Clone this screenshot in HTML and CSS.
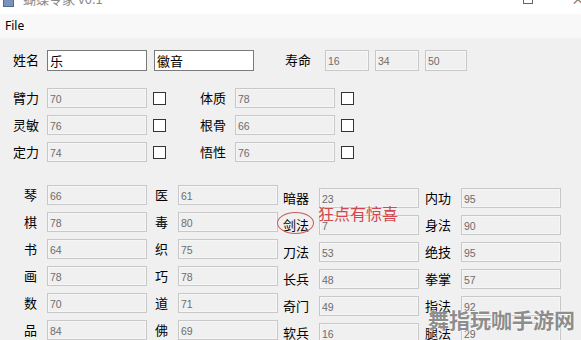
FILE: index.html
```html
<!DOCTYPE html>
<html lang="zh-CN">
<head>
    <meta charset="UTF-8">
    <title>蝴蝶令家 v0.1</title>
    <link rel="stylesheet" href="styles.css">
</head>
<body>
    <div class="titlebar">
        <span class="app-icon"></span>
        <span class="title">蝴蝶令家 v0.1</span>
        <span class="win-max"></span>
        <span class="win-close">×</span>
    </div>
    <div class="menubar"><span>File</span></div>

    <div class="main">
        <div class="row name-row">
            <span class="label w34">姓名</span>
            <input class="edit" type="text" value="乐">
            <input class="edit second" type="text" value="徽音">
            <span class="label life">寿命</span>
            <input class="box small" type="text" value="16" disabled>
            <input class="box small" type="text" value="34" disabled>
            <input class="box small last" type="text" value="50" disabled>
        </div>

        <div class="attrs">
            <div class="row">
                <span class="label w34">臂力</span><input class="box" value="70" disabled><span class="check"></span>
                <span class="label w35 col2">体质</span><input class="box" value="78" disabled><span class="check"></span>
            </div>
            <div class="row">
                <span class="label w34">灵敏</span><input class="box" value="76" disabled><span class="check"></span>
                <span class="label w35 col2">根骨</span><input class="box" value="66" disabled><span class="check"></span>
            </div>
            <div class="row">
                <span class="label w34">定力</span><input class="box" value="74" disabled><span class="check"></span>
                <span class="label w35 col2">悟性</span><input class="box" value="76" disabled><span class="check"></span>
            </div>
        </div>

        <div class="skills">
            <div class="skill-grid left">
                <span class="label r">琴</span><input class="box" value="66" disabled>
                <span class="label r">医</span><input class="box" value="61" disabled>
                <span class="label r">棋</span><input class="box" value="78" disabled>
                <span class="label r">毒</span><input class="box" value="80" disabled>
                <span class="label r">书</span><input class="box" value="64" disabled>
                <span class="label r">织</span><input class="box" value="75" disabled>
                <span class="label r">画</span><input class="box" value="78" disabled>
                <span class="label r">巧</span><input class="box" value="78" disabled>
                <span class="label r">数</span><input class="box" value="70" disabled>
                <span class="label r">道</span><input class="box" value="71" disabled>
                <span class="label r">品</span><input class="box" value="84" disabled>
                <span class="label r">佛</span><input class="box" value="69" disabled>
            </div>
            <div class="skill-grid right">
                <span class="label r">暗器</span><input class="box" value="23" disabled>
                <span class="label r">内功</span><input class="box" value="95" disabled>
                <span class="label r">剑法</span><input class="box" value="7" disabled>
                <span class="label r">身法</span><input class="box" value="90" disabled>
                <span class="label r">刀法</span><input class="box" value="53" disabled>
                <span class="label r">绝技</span><input class="box" value="95" disabled>
                <span class="label r">长兵</span><input class="box" value="48" disabled>
                <span class="label r">拳掌</span><input class="box" value="57" disabled>
                <span class="label r">奇门</span><input class="box" value="49" disabled>
                <span class="label r">指法</span><input class="box" value="92" disabled>
                <span class="label r">软兵</span><input class="box" value="16" disabled>
                <span class="label r">腿法</span><input class="box" value="29" disabled>
            </div>
        </div>
    </div>

    <!-- annotation drawn on top of the screenshot -->
    <span class="circle"></span>
    <span class="note">狂点有惊喜</span>
    <span class="watermark">舞指玩咖手游网</span>
</body>
</html>
```

FILE: styles.css
```css
body {
    margin: 0;
    width: 581px;
    height: 340px;
    overflow: hidden;
    position: relative;
    background-color: #f0f0f0;
    font-family: "Noto Sans CJK SC", "Noto Sans", sans-serif;
    color: #000;
}

.titlebar {
    height: 14px;
    background-color: #fff;
    display: flex;
    align-items: flex-start;
    overflow: hidden;
}

.app-icon {
    width: 9px;
    height: 6px;
    margin-left: 3px;
    background-color: #7b93b8;
    border: 1px solid #4a6a98;
    border-top: none;
}

.title {
    margin-left: 9px;
    margin-top: -10px;
    font-size: 13px;
    line-height: 18px;
    color: #8a8a8a;
}

.win-max {
    margin-left: auto;
    width: 8px;
    height: 3px;
    border: 1px solid #666;
    border-top: none;
}

.win-close {
    margin-left: 38px;
    margin-top: -9px;
    width: 10px;
    font-size: 14px;
    line-height: 14px;
    color: #666;
}

.menubar {
    height: 24px;
    background-color: #f8f8f8;
    padding-left: 5px;
    font-family: "Noto Sans", sans-serif;
    font-size: 12px;
    line-height: 24px;
}

.main {
    padding: 12px 0 0 13px;
}

.row {
    display: flex;
    align-items: center;
    height: 20px;
}

.label {
    font-size: 13px;
    line-height: 20px;
    white-space: nowrap;
}

.w34 { width: 34px; }
.w35 { width: 35px; }
.col2 { margin-left: 34px; }
.life { width: 40px; margin-left: 31px; }

input {
    box-sizing: border-box;
    margin: 0;
    outline: none;
}

.edit {
    width: 100px;
    height: 21px;
    border: 1px solid #7a7a7a;
    background-color: #fff;
    padding: 0 2px;
    font-family: "Noto Sans CJK SC", sans-serif;
    font-size: 13px;
    color: #000;
}

.edit.second {
    margin-left: 7px;
}

.box {
    width: 100px;
    height: 20px;
    border: 1px solid #c8c8c8;
    box-shadow: inset 0 0 0 1px #f6f6f6;
    background-color: #f0f0f0;
    padding: 1px 2px 0;
    font-family: "Liberation Sans", sans-serif;
    font-size: 10.5px;
    color: #6d6d6d;
    -webkit-text-fill-color: #6d6d6d;
}

.box.small {
    width: 44px;
    height: 21px;
    margin-right: 6px;
}

.box.small.last {
    width: 42px;
}

.check {
    box-sizing: border-box;
    width: 13px;
    height: 13px;
    margin-left: 6px;
    border: 1px solid #333;
    background-color: #fff;
}

.attrs {
    margin-top: 18px;
    display: flex;
    flex-direction: column;
    gap: 7px;
}

.skills {
    margin-top: 23px;
    display: flex;
    align-items: flex-start;
}

.skill-grid {
    display: grid;
    grid-auto-rows: 20px;
    row-gap: 7px;
}

.skill-grid.left {
    grid-template-columns: 34px 100px 31px 100px;
}

.skill-grid.right {
    grid-template-columns: 41px 100px 42px 100px;
    padding-top: 3px;
}

.label.r {
    text-align: right;
    padding-right: 10px;
}

.circle {
    position: absolute;
    left: 277px;
    top: 212px;
    width: 35px;
    height: 20px;
    border: 1px solid #c85a5f;
    border-radius: 50%;
}

.note {
    position: absolute;
    left: 318px;
    top: 205px;
    font-size: 16px;
    line-height: 16px;
    color: #d0484f;
}

.watermark {
    position: absolute;
    left: 428px;
    top: 307px;
    font-size: 21px;
    line-height: 24px;
    font-weight: bold;
    color: #8d8d8d;
    text-shadow: 0 0 2px #fff, 0 0 2px #fff;
}
```
